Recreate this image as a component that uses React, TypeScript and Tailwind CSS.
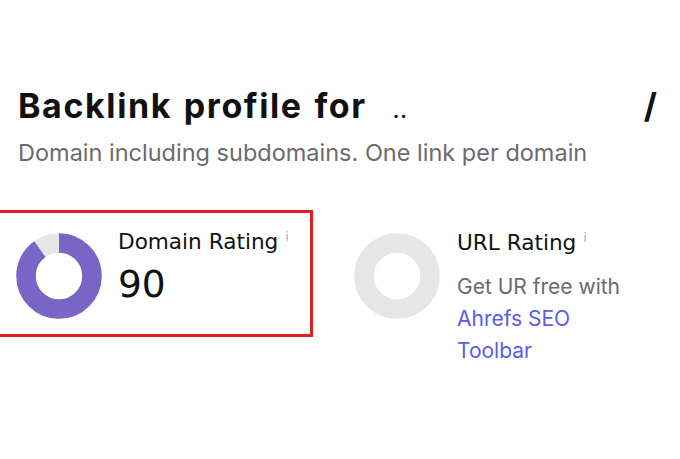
import React from "react";

function Donut({ value, color, track }: { value: number; color: string; track: string }) {
    const r = 33;
    const c = 2 * Math.PI * r;
    return (
        <svg width="86" height="86" viewBox="0 0 86 86" className="shrink-0">
            <circle cx="43" cy="43" r={r} fill="none" stroke={track} strokeWidth="19.5" />
            {value > 0 && (
                <circle
                    cx="43"
                    cy="43"
                    r={r}
                    fill="none"
                    stroke={color}
                    strokeWidth="19.5"
                    strokeDasharray={`${(c * value) / 100} ${c}`}
                    transform="rotate(-90 43 43)"
                />
            )}
        </svg>
    );
}

const dejavu = { fontFamily: "'DejaVu Sans', Verdana, sans-serif" };

export default function App() {
    return (
        <main
            className="w-[680px] h-[459px] bg-white overflow-hidden pt-[84px]"
            style={{ fontFamily: "Inter, 'Noto Sans', sans-serif" }}
        >
            {/* Header */}
            <div className="pl-[18px] pr-[23px]">
                <div className="flex items-baseline text-[34px] font-bold text-[#111] leading-[44px] tracking-[1.6px] [word-spacing:2px]">
                    <span>Backlink profile for</span>
                    <span className="ml-[26px] text-[20px] leading-none tracking-[1px]">..</span>
                    <span className="ml-auto tracking-normal">/</span>
                </div>
                <p className="mt-[11px] text-[23.5px] leading-[28px] text-[#6b6b6b]">
                    Domain including subdomains. One link per domain
                </p>
            </div>

            {/* Ratings */}
            <div className="flex items-start mt-[43px]">
                <div className="flex items-start w-[313px] h-[127px] border-[3px] border-l-0 border-[#e41b1b] pl-[16px]">
                    <div className="mt-[20px]">
                        <Donut value={90} color="#7865c6" track="#e6e6e6" />
                    </div>
                    <div className="ml-[16px] mt-[15px] text-[#111]" style={dejavu}>
                        <p className="text-[21.6px] leading-[28px] whitespace-nowrap">
                            Domain Rating
                            <span className="relative -top-[8px] ml-[7px] text-[13px] text-[#a8a8a8]">i</span>
                        </p>
                        <p className="mt-[3px] text-[37.5px] leading-[44px]">90</p>
                    </div>
                </div>

                <div className="flex items-start ml-[41px]">
                    <div className="mt-[23px]">
                        <Donut value={0} color="#7865c6" track="#e6e6e6" />
                    </div>
                    <div className="ml-[17px] mt-[19px]">
                        <p className="text-[21.6px] leading-[28px] text-[#111] whitespace-nowrap" style={dejavu}>
                            URL Rating
                            <span className="relative -top-[8px] ml-[7px] text-[13px] text-[#a8a8a8]">i</span>
                        </p>
                        <p className="mt-[11px] text-[21px] leading-[32px] text-[#6b6b6b] w-[180px]">
                            Get UR free with{" "}
                            <a className="text-[#5b5bf0]">Ahrefs SEO Toolbar</a>
                        </p>
                    </div>
                </div>
            </div>
        </main>
    );
}
